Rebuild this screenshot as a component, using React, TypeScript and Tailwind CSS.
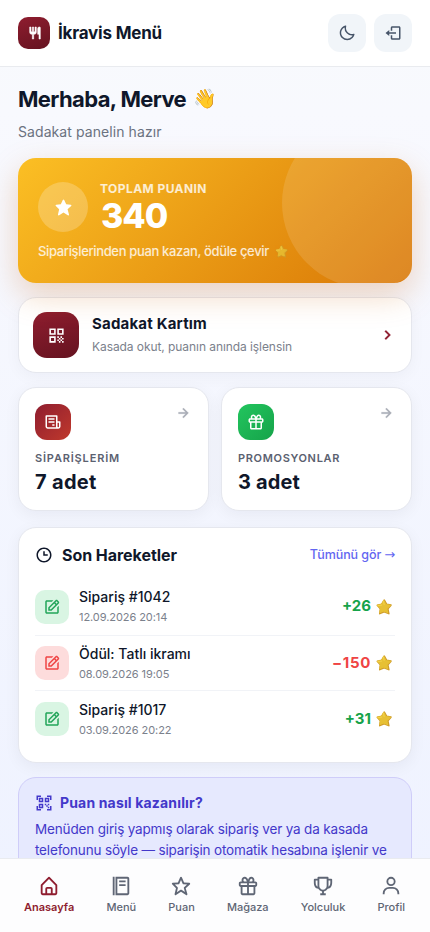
import type { ReactNode } from 'react';
import {
  BiChevronRight,
  BiEdit,
  BiFoodMenu,
  BiGift,
  BiHomeAlt,
  BiLogOut,
  BiMoon,
  BiQr,
  BiQrScan,
  BiReceipt,
  BiRestaurant,
  BiRightArrowAlt,
  BiSolidStar,
  BiStar,
  BiTime,
  BiTrophy,
  BiUser,
} from 'react-icons/bi';

function GoldStar({ className }: { className: string }) {
  return (
    <svg viewBox="0 0 24 24" className={className}>
      <path d="M12.4 1.6l3.4 6.2 6.6 1.4-4.6 5.5 1.4 7.2-7-2.8-6.5 2.8.9-7.2L2 9.4l6.4-1.4z" fill="#cf9c2b" stroke="#cf9c2b" strokeWidth="2.4" strokeLinejoin="round" />
      <path d="M11.6 2.2l3 6.1 6.9 1.1-5.2 4.9 1 6-5.9-2.4-5.4 2.4 1-6.3L2.2 9.4l6.2-1.2z" fill="#e7c034" stroke="#e7c034" strokeWidth="1.8" strokeLinejoin="round" />
      <path d="M11.3 3l.9 5.2M3 9.8l5.6-.7" stroke="#f3d750" strokeWidth="1.3" strokeLinecap="round" />
    </svg>
  );
}

function StatCard({ icon, tint, label, labelClass, value, valueClass }: { icon: ReactNode; tint: string; label: string; labelClass: string; value: string; valueClass: string }) {
  return (
    <div className="h-[124px] rounded-[18px] border border-[#e5e7ee] bg-white p-4 shadow-[0_4px_16px_rgba(15,23,42,0.05)]">
      <div className="flex items-start justify-between">
        <div className={`flex size-9 items-center justify-center rounded-xl text-[18px] text-white ${tint}`}>{icon}</div>
        <BiRightArrowAlt className="size-[18px] stroke-[0.3] text-[#a9adb6]" />
      </div>
      <div className={`mt-[10px] text-[11px] leading-4 font-semibold text-[#5b6170] ${labelClass}`}>{label}</div>
      <div className={`mt-[2px] text-[20px] leading-[28px] font-bold ${valueClass}`}>{value}</div>
    </div>
  );
}

const activity = [
  { title: 'Sipariş #1042', date: '12.09.2026 20:14', points: '+26', tracking: '', earned: true },
  { title: 'Ödül: Tatlı ikramı', date: '08.09.2026 19:05', points: '−150', tracking: 'tracking-[0.66px]', earned: false },
  { title: 'Sipariş #1017', date: '03.09.2026 20:22', points: '+31', tracking: '', earned: true },
];

const tabs = [
  { label: 'Anasayfa', Icon: BiHomeAlt, active: true },
  { label: 'Menü', Icon: BiFoodMenu, active: false },
  { label: 'Puan', Icon: BiStar, active: false },
  { label: 'Mağaza', Icon: BiGift, active: false },
  { label: 'Yolculuk', Icon: BiTrophy, active: false },
  { label: 'Profil', Icon: BiUser, active: false },
];

export default function App() {
  return (
    <div className="flex h-[932px] w-[430px] flex-col overflow-hidden bg-[linear-gradient(180deg,#f8fafc_0%,#f8f9fe_12%,#eef2ff_100%)] font-['Inter','Noto_Color_Emoji',sans-serif] text-[#0f172a]">
      <header className="flex h-[67px] shrink-0 items-center justify-between border-b border-[#e9ebef] bg-white px-[18px]">
        <div className="flex items-center gap-2">
          <div className="flex size-8 items-center justify-center rounded-[10px] bg-linear-160 from-[#8f1d2f] to-[#651320]">
            <BiRestaurant className="ml-px size-4 stroke-[0.8] text-white" />
          </div>
          <span className="pt-px text-[17px] font-bold tracking-[-0.2px]">İkravis Menü</span>
        </div>
        <div className="flex gap-2 text-[#475569]">
          <button className="flex size-[38px] items-center justify-center rounded-xl bg-[#f1f5f9]"><BiMoon className="size-[18px]" /></button>
          <button className="flex size-[38px] items-center justify-center rounded-xl bg-[#f1f5f9]"><BiLogOut className="size-[18px]" /></button>
        </div>
      </header>

      <main className="min-h-0 flex-1 overflow-hidden px-[18px] pt-4">
        <h1 className="flex h-8 items-center text-[22px] font-bold tracking-[-0.63px] whitespace-pre">Merhaba, Merve<span className="ml-[7px] text-[19px] tracking-normal">👋</span></h1>
        <p className="mt-[6px] text-[14px] leading-[22px] tracking-[0.08px] text-[#6b7280]">Sadakat panelin hazır</p>

        <section className="relative z-10 mt-[15px] h-[125px] rounded-[18px] shadow-[0_12px_32px_rgba(205,100,10,0.26)]">
          <div className="relative h-full overflow-hidden rounded-[18px] bg-[linear-gradient(135deg,#fbbf24_0%,#d97706_100%)] px-5 pt-6">
            <div className="absolute -top-10 -right-10 size-[170px] rounded-full bg-white/12" />
            <div className="flex items-start gap-3">
              <div className="flex size-[50px] items-center justify-center rounded-full bg-white/22"><BiSolidStar className="size-[19px] text-white" /></div>
              <div className="text-white">
                <div className="text-[12px] leading-[14px] font-bold tracking-[0.43px] text-white/80">TOPLAM PUANIN</div>
                <div className="pl-px text-[34px] leading-[40px] font-extrabold tracking-[-1px]">340</div>
              </div>
            </div>
            <div className="mt-[7px] flex items-center text-[13px] leading-4 font-medium tracking-[-0.35px] text-white/80">
              Siparişlerinden puan kazan, ödüle çevir<GoldStar className="ml-[6px] size-[13px] opacity-85" />
            </div>
          </div>
        </section>

        <section className="mt-[14px] flex h-[76px] items-center rounded-[18px] border border-[#e5e7ee] bg-white px-[14px] shadow-[0_4px_16px_rgba(15,23,42,0.04)]">
          <div className="flex size-[46px] items-center justify-center rounded-[14px] bg-linear-160 from-[#8f1d2f] to-[#651320]"><BiQr className="size-[19px] text-white" /></div>
          <div className="ml-[13px] flex-1">
            <div className="text-[15px] leading-[22px] font-bold tracking-[0.19px]">Sadakat Kartım</div>
            <div className="mt-[2px] text-[12px] leading-[20px] tracking-[-0.07px] text-[#7b818c]">Kasada okut, puanın anında işlensin</div>
          </div>
          <BiChevronRight className="size-5 stroke-[0.3] text-[#8f1d2f]" />
        </section>

        <section className="mt-[14px] grid grid-cols-2 gap-3">
          <StatCard icon={<BiReceipt />} tint="bg-linear-135 from-[#8f1d2f] to-[#c0392b]" label="SİPARİŞLERİM" labelClass="tracking-[0.83px]" value="7 adet" valueClass="tracking-[0.3px]" />
          <StatCard icon={<BiGift />} tint="bg-linear-135 from-[#22c55e] to-[#16a34a]" label="PROMOSYONLAR" labelClass="tracking-[0.66px]" value="3 adet" valueClass="tracking-[0.15px]" />
        </section>

        <section className="mt-4 h-[236px] rounded-[18px] border border-[#e5e7ee] bg-white px-4 pt-[15px] shadow-[0_4px_16px_rgba(15,23,42,0.05)]">
          <div className="flex h-6 items-center">
            <BiTime className="size-[18px]" />
            <h2 className="ml-[9px] flex-1 text-[16px] font-bold tracking-[-0.05px]">Son Hareketler</h2>
            <a className="flex items-center text-[12.5px] font-medium tracking-[-0.08px] text-[#6366f1]">Tümünü gör<span className="ml-[3px] font-['DejaVu_Sans'] text-[13px] leading-4">→</span></a>
          </div>
          <ul className="mt-3">
            {activity.map((a) => (
              <li key={a.title} className="flex h-[55px] items-center border-b border-[#f1f3f7] first:h-[57px] first:pb-px last:h-14 last:border-b-0">
                <div className={`flex size-[34px] items-center justify-center rounded-[10px] ${a.earned ? 'bg-[#d9f5e3] text-[#22a55a]' : 'bg-[#fddcdc] text-[#ef4444]'}`}><BiEdit className="size-[18px]" /></div>
                <div className="ml-[10px] flex-1">
                  <div className="text-[14px] leading-5 font-medium">{a.title}</div>
                  <div className="mt-px text-[11px] leading-[18px] tracking-[-0.07px] text-[#7b818c]">{a.date}</div>
                </div>
                <span className={`text-[15px] font-bold ${a.tracking} ${a.earned ? 'text-[#16a34a]' : 'text-[#ef4444]'}`}>{a.points}</span>
                <GoldStar className="mr-[3px] ml-[5px] size-4" />
              </li>
            ))}
          </ul>
        </section>

        <section className="mt-[14px] h-[130px] rounded-[18px] border border-[#cfcdf9] bg-[#e6e9fe] px-4 pt-[14px] text-[#4338ca]">
          <div className="flex h-[22px] items-center">
            <BiQrScan className="size-[18px]" />
            <h2 className="-mt-px ml-[7px] text-[14px] font-bold tracking-[0.16px]">Puan nasıl kazanılır?</h2>
          </div>
          <p className="mt-[5px] text-[13.5px] leading-[21px] tracking-[-0.16px] whitespace-nowrap">
            Menüden giriş yapmış olarak sipariş ver ya da kasada<br />
            telefonunu söyle — siparişin otomatik hesabına işlenir ve
          </p>
        </section>
      </main>

      <nav className="relative z-20 flex h-[74px] shrink-0 justify-between border-t border-[#e9ebef] bg-[#fdfdfe] pt-4 pr-[25px] pl-6">
        {tabs.map(({ label, Icon, active }) => (
          <a key={label} className={`flex flex-col items-center text-[11px] leading-[14px] ${active ? 'font-semibold text-[#8f1d2f]' : 'font-medium text-[#5f6675]'}`}>
            <Icon className="mb-[3px] size-[22px]" />
            {label}
          </a>
        ))}
      </nav>
    </div>
  );
}
